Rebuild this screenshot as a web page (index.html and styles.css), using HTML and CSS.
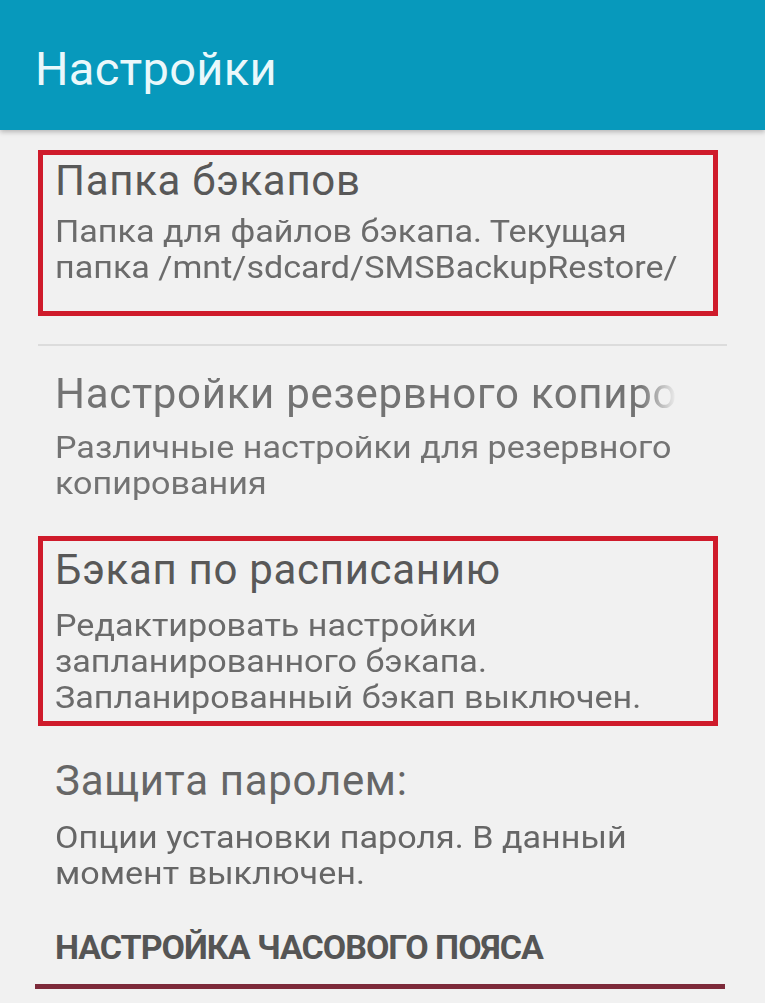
FILE: index.html
```html
<!DOCTYPE html>
<html lang="ru">
<head>
<meta charset="utf-8">
<title>Настройки</title>
<link rel="stylesheet" href="styles.css">
</head>
<body>
<header class="appbar"><h1 class="appbar-title">Настройки</h1></header>
<main class="list">
  <section class="item item-marked item-first">
    <div class="item-title">Папка бэкапов</div>
    <div class="item-summary">Папка для файлов бэкапа. Текущая<br>папка /mnt/sdcard/SMSBackupRestore/</div>
  </section>
  <div class="divider"></div>
  <section class="item item-second">
    <div class="item-title item-title-fade">Настройки резервного копирования</div>
    <div class="item-summary">Различные настройки для резервного<br>копирования</div>
  </section>
  <section class="item item-marked item-third">
    <div class="item-title">Бэкап по расписанию</div>
    <div class="item-summary">Редактировать настройки<br>запланированного бэкапа.<br>Запланированный бэкап выключен.</div>
  </section>
  <section class="item item-fourth">
    <div class="item-title">Защита паролем:</div>
    <div class="item-summary">Опции установки пароля. В данный<br>момент выключен.</div>
  </section>
  <div class="category">НАСТРОЙКА ЧАСОВОГО ПОЯСА</div>
  <div class="category-line"></div>
</main>
</body>
</html>
```
FILE: styles.css
```css
html, body {
  margin: 0;
  padding: 0;
}
body {
  background: #f1f1f1;
  font-family: Roboto, "Noto Sans", sans-serif;
  width: 765px;
  height: 1003px;
  overflow: hidden;
}
.appbar {
  height: 130px;
  background: #0799bc;
  box-shadow: 0 2px 5px rgba(0,0,0,0.25);
  display: flex;
  align-items: center;
  padding: 6px 0 0 35px;
  box-sizing: border-box;
}
.appbar-title {
  margin: 0;
  font-weight: 400;
  font-size: 47px;
  letter-spacing: 0.3px;
  color: #eaf8fb;
}
.list {
  padding: 0 0 0 38px;
  width: 690px;
}
.item {
  width: 680px;
  box-sizing: border-box;
  border: 5px solid transparent;
  padding: 2px 36px 0 12px;
}
.item-marked {
  border-color: #cf1b2b;
}
.item-title {
  font-size: 42px;
  line-height: 48px;
  letter-spacing: 0.7px;
  color: #585858;
  white-space: nowrap;
  overflow: hidden;
}
.item-title-fade {
  -webkit-mask-image: linear-gradient(to right, #000 94%, transparent 100%);
  mask-image: linear-gradient(to right, #000 94%, transparent 100%);
}
.item-summary {
  font-size: 31px;
  line-height: 36px;
  color: #6b6b6b;
  margin-top: 9px;
  white-space: nowrap;
  transform: scaleX(1.1);
  transform-origin: left center;
}
.item-first {
  margin-top: 20px;
  padding-bottom: 25px;
}
.divider {
  height: 2px;
  background: #dcdcdc;
  width: 689px;
  margin-top: 28px;
}
.item-second {
  margin-top: 17px;
}
.item-second .item-summary {
  margin-top: 12px;
}
.item-second .item-title,
.item-second .item-summary {
  color: #737373;
}
.item-third {
  margin-top: 29px;
  padding-top: 5px;
  padding-bottom: 5px;
}
.item-third .item-summary {
  margin-top: 14px;
}
.item-fourth {
  margin-top: 24px;
}
.item-fourth .item-summary {
  margin-top: 15px;
  line-height: 36px;
}
.item-fourth .item-title,
.item-fourth .item-summary {
  color: #666;
}
.category {
  font-size: 34px;
  font-weight: 700;
  line-height: 40px;
  color: #555;
  padding-left: 17px;
  margin-top: 30px;
  letter-spacing: -1px;
}
.category-line {
  height: 5px;
  background: #7d2a3a;
  width: 690px;
  margin-top: 17px;
  margin-left: -3px;
}
```
